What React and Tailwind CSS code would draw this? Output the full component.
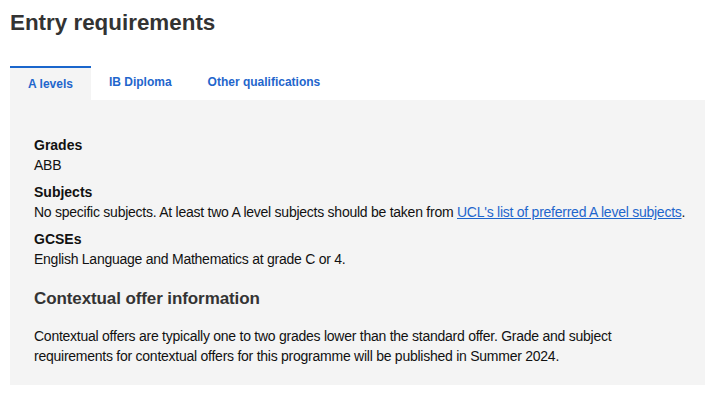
import { useState } from 'react';

const tabs = ['A levels', 'IB Diploma', 'Other qualifications'];

const App = () => {
    const [active, setActive] = useState(0);

    return (
        <div className="min-h-screen bg-white px-[10px] pt-[10px] font-['Liberation_Sans',Arial,sans-serif]">
            <h2 className="text-[22.4px] leading-[26px] font-bold text-[#333333] mb-[30px]">Entry requirements</h2>

            <div className="flex">
                {tabs.map((tab, i) => (
                    <button
                        key={tab}
                        onClick={() => setActive(i)}
                        className={
                            i === active
                                ? 'h-[34px] px-[18px] pt-[8px] flex items-start bg-[#f4f4f4] border-t-2 border-[#1a66cc] text-[12px] leading-[16px] font-bold text-[#1f66cc]'
                                : 'h-[34px] px-[18px] pt-[8px] flex items-start text-[12px] leading-[16px] font-bold text-[#1f66cc]'
                        }
                    >
                        {tab}
                    </button>
                ))}
            </div>

            <div className="w-[695px] bg-[#f4f4f4] pl-[24px] pr-[14px] pt-[35px] pb-[19px] text-[14px] leading-[20px] tracking-[-0.25px] text-[#111111]">
                <dl>
                    <dt className="font-bold tracking-normal">Grades</dt>
                    <dd>ABB</dd>
                    <dt className="font-bold tracking-normal mt-[7px]">Subjects</dt>
                    <dd>
                        No specific subjects. At least two A level subjects should be taken from{' '}
                        <a href="#" className="text-[#1f66cc] underline">UCL's list of preferred A level subjects</a>.
                    </dd>
                    <dt className="font-bold tracking-normal mt-[7px]">GCSEs</dt>
                    <dd>English Language and Mathematics at grade C or 4.</dd>
                </dl>

                <h3 className="mt-[19px] text-[17px] leading-[22px] font-bold tracking-[-0.1px] text-[#333333]">Contextual offer information</h3>
                <p className="mt-[17px] leading-[19.5px]">
                    Contextual offers are typically one to two grades lower than the standard offer. Grade and subject requirements for contextual offers for this programme will be published in Summer 2024.
                </p>
            </div>
        </div>
    );
};

export default App;
